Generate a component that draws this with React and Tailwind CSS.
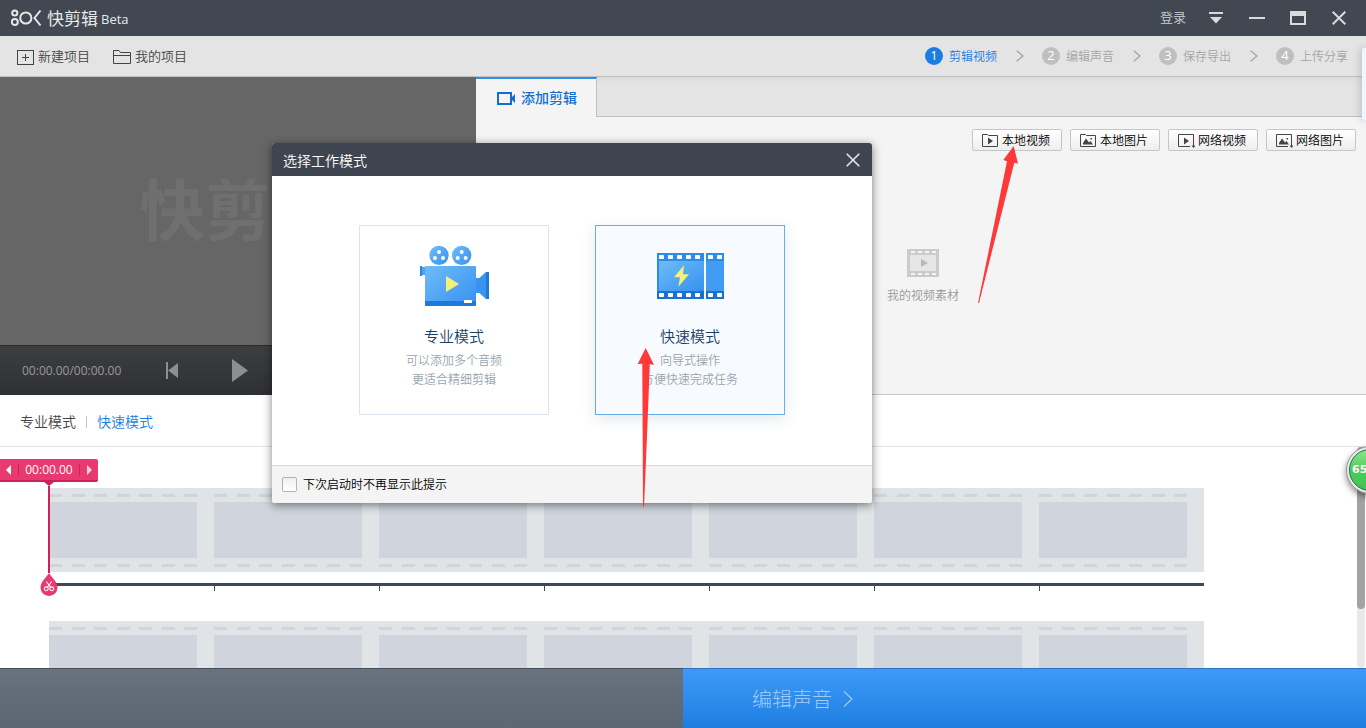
import React from "react";

const FRAMES = [0, 1, 2, 3, 4, 5, 6];

function Logo() {
  return (
    <svg width="31" height="18" viewBox="0 0 31 18" fill="none" stroke="#e6e8ea" strokeWidth="2" aria-hidden="true">
      <circle cx="3.8" cy="4" r="2.6" />
      <circle cx="3.8" cy="13" r="3" />
      <circle cx="14.8" cy="9" r="5.6" />
      <path d="M29.500 1.500L23.500 9L29.500 16.500" />
    </svg>
  );
}

function TitleBar() {
  return (
    <header className="flex h-9 shrink-0 items-center justify-between bg-[#414851] pr-5 pl-[11px] text-[#e6e8ea]">
      <div className="flex items-center">
        <Logo />
        <h1 className="ml-[5px] pt-[2px] text-[17px] leading-6 font-normal">快剪辑</h1>
        <span className="ml-[3px] pt-1 text-[13px] font-normal">Beta</span>
      </div>
      <div className="flex items-center">
        <button type="button" className="text-[13px] text-[#cdd0d3]">登录</button>
        <button type="button" aria-label="菜单" className="ml-[23px]">
          <svg width="14" height="14" viewBox="0 0 14 14" fill="#d8dadc"><path d="M0 1h14v2H0zM1 6h12L7 12.500z" /></svg>
        </button>
        <button type="button" aria-label="最小化" className="ml-[26px]">
          <svg width="16" height="14" viewBox="0 0 16 14" fill="#d8dadc"><path d="M0 6h16v2H0z" /></svg>
        </button>
        <button type="button" aria-label="最大化" className="ml-[25px]">
          <svg width="16" height="14" viewBox="0 0 16 14" fill="#d8dadc"><path fillRule="evenodd" d="M0 0h16v14H0zM2 5v7h12V5z" /></svg>
        </button>
        <button type="button" aria-label="关闭" className="ml-[26px]">
          <svg width="14" height="14" viewBox="0 0 14 14" stroke="#d8dadc" strokeWidth="2"><path d="M.7 .7l12.600 12.600M13.300 .7L.7 13.300" /></svg>
        </button>
      </div>
    </header>
  );
}

const STEPS = ["剪辑视频", "编辑声音", "保存导出", "上传分享"];

function Toolbar() {
  return (
    <div className="flex h-[41px] shrink-0 items-center justify-between border-b border-[#c0c0c0] bg-[#e4e4e4] pr-[18px] pl-[17px]">
      <div className="flex items-center gap-[23px] text-[13px] text-[#444]">
        <button type="button" className="flex items-center gap-1">
          <svg className="mt-[2px]" width="17" height="15" viewBox="0 0 17 15" fill="none" stroke="#444" shapeRendering="crispEdges">
            <path d="M.5 .5h16v14H.5zM5 7.500h7M8.500 4v7" />
          </svg>
          <span className="pt-[2px]">新建项目</span>
        </button>
        <button type="button" className="flex items-center gap-1">
          <svg className="mt-[2px]" width="18" height="14" viewBox="0 0 18 14" fill="none" stroke="#444">
            <path d="M.5 13.500V.5h5.500l1.500 2h10v11zM.5 5.500h17" />
          </svg>
          <span className="pt-[2px]">我的项目</span>
        </button>
      </div>
      <ol className="flex items-center text-xs">
        {STEPS.map((name, i) => (
          <li key={name} className={i === 0 ? "flex items-center text-[#1a7de0]" : "flex items-center text-[#a6a6a6]"}>
            {i > 0 && (
              <svg className="mr-[18px] ml-[19px]" width="8" height="12" viewBox="0 0 8 12" fill="none" stroke="#a2a2a2" strokeWidth="1.2" aria-hidden="true">
                <path d="M.7 .8L7 6L.7 11.200" />
              </svg>
            )}
            <span className={i === 0
              ? "flex size-[18px] items-center justify-center rounded-full bg-[#1a7de0] text-[13px] font-medium text-white"
              : "flex size-[18px] items-center justify-center rounded-full bg-[#bfbfbf] text-[13px] font-medium text-white"}>
              {i + 1}
            </span>
            <span className="ml-[6px] pt-[2px]">{name}</span>
          </li>
        ))}
      </ol>
    </div>
  );
}

function Preview() {
  return (
    <section className="flex w-[476px] shrink-0 flex-col bg-[#666]">
      <div className="flex flex-1 items-center justify-center pb-1 text-[66px] font-bold text-[#6f6f6f]">快剪辑</div>
      <div className="flex h-[50px] shrink-0 items-center border-t border-[#2c2c2e] bg-linear-to-b from-[#3d3e40] to-[#2f3034] pl-[22px]">
        <span className="w-36 text-xs font-normal text-[#9a9a9a]">00:00.00/00:00.00</span>
        <button type="button" aria-label="上一帧">
          <svg width="12" height="17" viewBox="0 0 12 17" fill="#8c8e90"><path d="M0 0h2v17H0zM12 1v15L2 8.500z" /></svg>
        </button>
        <button type="button" aria-label="播放" className="ml-[54px]">
          <svg width="16" height="23" viewBox="0 0 16 23" fill="#8c8e90"><path d="M0 0l16 11.500L0 23z" /></svg>
        </button>
      </div>
    </section>
  );
}

function SourceIcon({ image, remote }) {
  return (
    <svg width="17" height="14" viewBox="0 0 17 14" fill="none" stroke="#444" aria-hidden="true">
      {remote ? <path d="M12 12.500H.5V.5h15V9" /> : <path d="M.5 12.500V.5h5l1 1h9v11z" />}
      {image ? (
        <path d="M3 10.500V9l3-4.500 3 4 1.500-1.500 2.500 3.500zM10.500 4h1.500v1.500h-1.500z" fill="#444" stroke="none" />
      ) : (
        <path d="M6 3.500v7L11 7z" fill="#444" stroke="none" />
      )}
      {remote && <path d="M15 9h1v2.500h1.500L15.500 14l-2-2.500H15z" fill="#444" stroke="none" />}
    </svg>
  );
}

const SOURCES = [
  { name: "本地视频", image: false, remote: false },
  { name: "本地图片", image: true, remote: false },
  { name: "网络视频", image: false, remote: true },
  { name: "网络图片", image: true, remote: true },
];

function Library() {
  return (
    <section className="flex min-w-0 flex-1 flex-col border-b border-[#c8c8c8] bg-[#f4f4f4]">
      <div className="flex h-10 shrink-0">
        <button type="button" className="flex w-[121px] items-center border-t-2 border-r border-t-[#2f8fe8] border-r-[#c0c0c0] pl-[21px] text-sm font-medium text-[#0f6fcf]">
          <svg width="18" height="13" viewBox="0 0 18 13" fill="none" stroke="#0f6fcf" strokeWidth="2" aria-hidden="true">
            <path d="M1 1h13v11H1z" />
            <path d="M14 5h1l3-3v9l-3-3h-1z" fill="#0f6fcf" stroke="none" />
          </svg>
          <span className="ml-[6px]">添加剪辑</span>
        </button>
        <div className="flex-1 border-b border-[#c0c0c0] bg-linear-to-b from-[#dcdcdc] to-[#e4e4e4] to-20%" />
      </div>
      <div className="flex justify-end gap-2 pt-3 pr-[10px]">
        {SOURCES.map((s) => (
          <button key={s.name} type="button" className="flex h-[22px] w-[90px] items-center gap-[3px] rounded-xs border border-[#c6c6c6] bg-linear-to-b from-white to-[#eeeeee] pt-[2px] pl-[9px] text-xs text-black">
            <SourceIcon image={s.image} remote={s.remote} />
            {s.name}
          </button>
        ))}
      </div>
      <div className="flex flex-1 flex-col items-center pt-[98px] pl-1">
        <svg width="32" height="28" viewBox="0 0 32 28" aria-hidden="true">
          <path d="M0 0h32v28H0z" fill="#cbcbcb" />
          <path d="M3 6h26v16H3z" fill="#e6e6e6" />
          <path d="M14 10v8l7-4z" fill="#b9b9b9" />
          <path d="M4 3h25M4 25h25" stroke="#f4f4f4" strokeWidth="2" strokeDasharray="4 3" />
        </svg>
        <p className="mt-[9px] text-xs leading-5 text-[#999]">我的视频素材</p>
      </div>
    </section>
  );
}

function Dashes() {
  return (
    <div className="flex justify-between">
      {FRAMES.map((d) => <span key={d} className="h-[3px] w-[13px] bg-[#d0d4dc]" />)}
    </div>
  );
}

function FilmRow() {
  return (
    <div className="mb-[30px] w-[1155px] shrink-0">
      <div className="flex h-[84px] bg-[#e0e4e7]">
        {FRAMES.map((f) => (
          <div key={f} className="w-[165px] pt-[6px] pr-[17px]">
            <Dashes />
            <div className="mt-[5px] mb-[6px] h-14 bg-[#d0d4dc]" />
            <Dashes />
          </div>
        ))}
      </div>
      <div className="mt-[11px] flex border-t-[3px] border-[#414851]">
        {FRAMES.map((f) => (
          <div key={f} className="h-[5px] shrink-0 border-r border-[#414851] first:w-[166px] not-first:w-[165px] last:w-0 last:border-r-0" />
        ))}
      </div>
    </div>
  );
}

function Playhead() {
  return (
    <div className="absolute top-3 left-0 flex w-[98px] flex-col items-center">
      <div className="flex h-[23px] w-full items-center justify-between rounded-r-xs border-b-2 border-[#cb2259] bg-[#e83a70] px-[6px] text-white">
        <button type="button" aria-label="后退">
          <svg width="6" height="10" viewBox="0 0 6 10" fill="#fff"><path d="M5 0v10L0 5z" /></svg>
        </button>
        <span className="h-3 w-px bg-[#cb2259]" />
        <span className="text-xs font-medium">00:00.00</span>
        <span className="h-3 w-px bg-[#cb2259]" />
        <button type="button" aria-label="前进">
          <svg width="6" height="10" viewBox="0 0 6 10" fill="#fbd3df"><path d="M1 0v10l5-5z" /></svg>
        </button>
      </div>
      <svg width="10" height="4" viewBox="0 0 10 4" fill="#cb2259" aria-hidden="true"><path d="M0 0h10L5 4z" /></svg>
      <div className="h-[87px] w-[2px] bg-[#cb2259]" />
      <svg width="18" height="23" viewBox="0 0 18 23" aria-hidden="true">
        <path d="M9 0C11 4 17.500 8.500 17.500 14.500A8.500 8.500 0 0 1 .5 14.500C.5 8.500 7 4 9 0z" fill="#e83a70" />
        <g fill="none" stroke="#fff" strokeWidth="1.100">
          <path d="M6.300 8.500l4.400 6M11.700 8.500l-4.400 6" />
          <circle cx="6.300" cy="15.800" r="1.900" />
          <circle cx="11.700" cy="15.800" r="1.900" />
        </g>
      </svg>
    </div>
  );
}

function Timeline() {
  return (
    <section className="relative flex min-h-0 flex-1 overflow-hidden bg-white pr-px">
      <div className="flex min-w-0 flex-1 flex-col overflow-hidden pt-[41px] pl-[49px]">
        <FilmRow />
        <FilmRow />
      </div>
      <div className="w-2 shrink-0 rounded-full bg-[#e9e9e9]">
        <div className="h-[162px] rounded-full bg-[#a3a3a3]" />
      </div>
      <Playhead />
    </section>
  );
}

function CameraArt() {
  return (
    <svg width="70" height="62" viewBox="207 90 210 186" aria-hidden="true">
      <defs>
        <linearGradient id="cam" x1="0" y1="0" x2="1" y2="1">
          <stop offset="0" stopColor="#6fbdf8" />
          <stop offset="1" stopColor="#3590f0" />
        </linearGradient>
      </defs>
      <path d="M214 156h12v24h-12z" fill="#4fa5f2" />
      <path d="M210 153h6v30h-6z" fill="#2f86e0" />
      <path d="M378 189h10l20-18v81l-20-18h-10z" fill="#3893f1" />
      <path d="M408 171h9v81h-9z" fill="#227ad6" />
      <rect x="225" y="153" width="153" height="120" rx="3" fill="url(#cam)" />
      <path d="M225 258h153v12q0 3-3 3H228q-3 0-3-3z" fill="#2079d8" />
      <path d="M342 255h24v9h-24z" fill="#fff" />
      <path d="M288 183v48l39-24z" fill="#f5f07a" />
      {[267, 335].map((cx) => (
        <g key={cx}>
          <circle cx={cx} cy="121" r="29" fill="url(#cam)" />
          <g fill="#fff">
            <circle cx={cx} cy="111" r="6" />
            <circle cx={cx - 12} cy="129" r="6" />
            <circle cx={cx + 12} cy="129" r="6" />
          </g>
        </g>
      ))}
    </svg>
  );
}

function FilmArt() {
  return (
    <svg width="70" height="62" viewBox="210 90 210 186" aria-hidden="true">
      <defs>
        <linearGradient id="film" x1="0" y1="0" x2="1" y2="1">
          <stop offset="0" stopColor="#6fbdf8" />
          <stop offset="1" stopColor="#3590f0" />
        </linearGradient>
      </defs>
      <path d="M216 114h141v138H216zM363 114h54v138h-54z" fill="#2b8cea" />
      <path d="M216 228h141v24H216zM363 228h54v24h-54z" fill="#1b72cc" />
      <path d="M222 138h135v90H222z" fill="url(#film)" />
      <path d="M363 138h54v90h-54z" fill="#409bf3" />
      {[222, 249, 276, 303, 330, 369, 396].map((x) => (
        <g key={x} fill="#fff">
          <rect x={x} y="120" width="15" height="12" rx="2" />
          <rect x={x} y="234" width="15" height="12" rx="2" />
        </g>
      ))}
      <path d="M297 151l-30 36h18l-5 28 32-37h-18z" fill="#f5f07a" />
    </svg>
  );
}

function ModeCard({ art, title, lines, active }) {
  return (
    <button type="button" className={active
      ? "flex size-[190px] flex-col items-center border border-[#65aeee] bg-[#f7fbff] pt-[19px] shadow-[0_4px_14px_rgba(60,90,130,0.14)]"
      : "flex size-[190px] flex-col items-center border border-[#dce5ed] bg-white pt-[19px]"}>
      {art}
      <span className="mt-[19px] text-[15px] leading-5 text-[#1c3f66]">{title}</span>
      <span className="mt-[5px] flex flex-col text-xs leading-[19px] text-[#9aa4ae]">
        {lines.map((l) => <span key={l}>{l}</span>)}
      </span>
    </button>
  );
}

function ModeDialog() {
  return (
    <div role="dialog" aria-labelledby="dialog-title" className="absolute top-[143px] left-[272px] w-[600px] overflow-hidden rounded-[3px] bg-white shadow-[0_2px_10px_rgba(0,0,0,0.5)]">
      <div className="flex h-[33px] items-center justify-between bg-[#3f4550] pr-3 pl-[11px] text-white">
        <h2 id="dialog-title" className="pt-[2px] text-sm font-[350]">选择工作模式</h2>
        <button type="button" aria-label="关闭">
          <svg width="14" height="14" viewBox="0 0 14 14" stroke="#e4e6e8" strokeWidth="1.6"><path d="M.7 .7l12.600 12.600M13.300 .7L.7 13.300" /></svg>
        </button>
      </div>
      <div className="flex justify-center gap-[46px] pt-[49px] pb-[50px]">
        <ModeCard art={<CameraArt />} title="专业模式" lines={["可以添加多个音频", "更适合精细剪辑"]} />
        <ModeCard active art={<FilmArt />} title="快速模式" lines={["向导式操作", "方便快速完成任务"]} />
      </div>
      <div className="flex h-[38px] items-center border-t border-[#d9d9d9] bg-[#f4f4f4] pl-[10px]">
        <label className="flex items-center gap-[6px] text-xs text-black">
          <input type="checkbox" className="size-[15px] appearance-none rounded-xs border border-[#b4b4b4] bg-linear-to-b from-[#f0f0f0] to-white" />
          下次启动时不再显示此提示
        </label>
      </div>
    </div>
  );
}

export default function App() {
  return (
    <div className="relative flex h-screen flex-col overflow-hidden bg-white font-['Open_Sans','Noto_Sans_CJK_SC',sans-serif] font-[350]">
      <TitleBar />
      <Toolbar />
      <main className="flex min-h-0 flex-1 flex-col">
        <div className="flex h-[318px] shrink-0">
          <Preview />
          <Library />
        </div>
        <nav className="flex h-[52px] shrink-0 items-center gap-[10px] border-b border-[#e4e4e4] pt-[2px] pl-5 text-sm">
          <button type="button" className="text-[#444]">专业模式</button>
          <span className="h-3 w-px bg-[#c4c4c4]" />
          <button type="button" className="text-[#1a7de0]">快速模式</button>
        </nav>
        <Timeline />
      </main>
      <footer className="flex h-[60px] shrink-0">
        <div className="w-1/2 border-t border-[#454d57] bg-linear-to-b from-[#69727f] to-[#5b6773]" />
        <button type="button" className="flex w-1/2 items-center gap-[11px] border-t border-[#2b74c4] bg-linear-to-b from-[#3d9af8] to-[#1d7ee0] pl-[69px] text-xl font-light text-[#9dcbfa]">
          <span className="pt-[2px]">编辑声音</span>
          <svg width="10" height="16" viewBox="0 0 10 16" fill="none" stroke="#9dcbfa" strokeWidth="1.2" aria-hidden="true">
            <path d="M1 .5L9 8L1 15.500" />
          </svg>
        </button>
      </footer>

      <ModeDialog />

      <div className="absolute top-12 right-0 h-[72px] w-1 rounded-l-xs bg-[#eef7ff] shadow-[0_0_8px_rgba(0,0,0,0.3)]" />
      <div className="absolute top-[446px] -right-[28px] flex size-[48px] items-center rounded-full border border-[#999] bg-[#e8e8e8] p-[2px] shadow-[0_3px_6px_rgba(0,0,0,0.45)]">
        <div className="flex size-full items-center rounded-full border border-[#16774a] bg-linear-to-b from-[#8be58c] via-[#4ccb5c] to-[#41c455] pl-[2px] font-['DejaVu_Sans',sans-serif] text-[11px] font-bold text-white">
          65
        </div>
      </div>
      <svg className="pointer-events-none absolute top-[146px] left-[978px]" width="42" height="158" viewBox="978 146 42 158" fill="#ff3838" aria-hidden="true">
        <path d="M1013.700 146L1003.300 160L1007 161.300L978 303L979 303L1014.300 162.700L1018 163.700z" />
      </svg>
      <svg className="pointer-events-none absolute top-[348px] left-[637px]" width="18" height="160" viewBox="637 348 18 160" fill="#ff3838" aria-hidden="true">
        <path d="M645.700 348L637.700 364L642.300 363.700L643 507L644 507Q647 440 649.800 364L654 365z" />
      </svg>
    </div>
  );
}
